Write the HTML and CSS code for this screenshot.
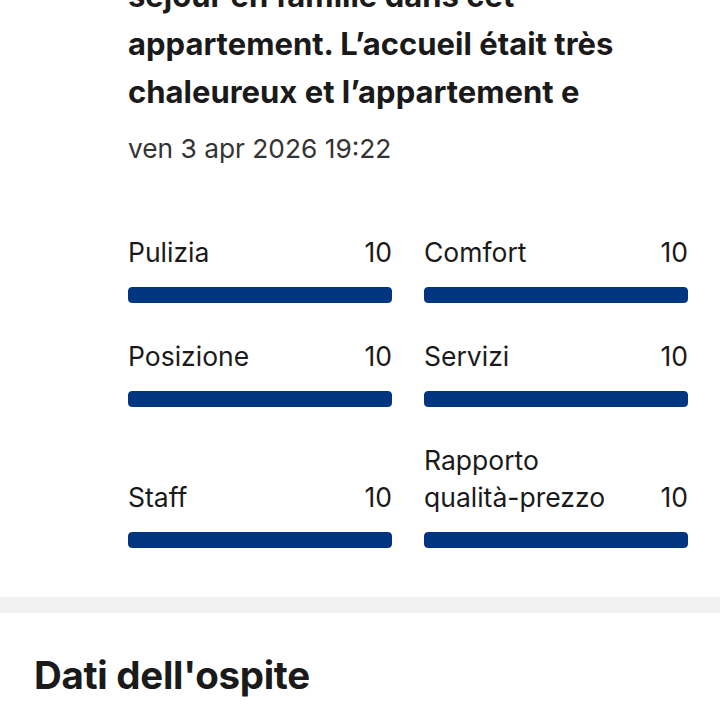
FILE: index.html
```html
<!DOCTYPE html>
<html>
<head>
  <title>Recensione</title>
  <link rel="stylesheet" href="styles.css">
</head>
<body>
  <div id="review">
    <p class="review-text">séjour en famille dans cet appartement. L’accueil était très chaleureux et l’appartement e</p>
    <div class="review-date">ven 3 apr 2026 19:22</div>

    <div id="scores">
      <div class="score">
        <div class="score-head"><span>Pulizia</span><span>10</span></div>
        <div class="bar"><div class="bar-fill" style="width: 100%"></div></div>
      </div>
      <div class="score">
        <div class="score-head"><span>Comfort</span><span>10</span></div>
        <div class="bar"><div class="bar-fill" style="width: 100%"></div></div>
      </div>
      <div class="score">
        <div class="score-head"><span>Posizione</span><span>10</span></div>
        <div class="bar"><div class="bar-fill" style="width: 100%"></div></div>
      </div>
      <div class="score">
        <div class="score-head"><span>Servizi</span><span>10</span></div>
        <div class="bar"><div class="bar-fill" style="width: 100%"></div></div>
      </div>
      <div class="score">
        <div class="score-head"><span>Staff</span><span>10</span></div>
        <div class="bar"><div class="bar-fill" style="width: 100%"></div></div>
      </div>
      <div class="score">
        <div class="score-head"><span>Rapporto<br>qualità-prezzo</span><span>10</span></div>
        <div class="bar"><div class="bar-fill" style="width: 100%"></div></div>
      </div>
    </div>
  </div>

  <div class="divider"></div>

  <div id="guest">
    <h2>Dati dell'ospite</h2>
  </div>
</body>
</html>
```

FILE: styles.css
```css
body {
  margin: 0;
  padding: 0;
  width: 720px;
  overflow: hidden;
  background-color: #fff;
  color: #1a1a1a;
  font-family: Inter, "Noto Sans", sans-serif;
}

#review {
  padding: 0 32px 0 128px;
  margin-top: -28px; /* list is scrolled, first line sits under the top edge */
}

.review-text {
  margin: 0;
  font-size: 31px;
  font-weight: 700;
  line-height: 48px;
  width: 540px;
  color: #1a1a1a;
}

.review-date {
  margin-top: 15px;
  font-size: 26.3px;
  line-height: 36px;
  color: #333;
}

#scores {
  display: grid;
  grid-template-columns: 1fr 1fr;
  column-gap: 32px;
  row-gap: 35px;
  margin-top: 67px;
  padding-bottom: 49px;
}

.score {
  display: flex;
  flex-direction: column;
  justify-content: flex-end;
}

.score-head {
  display: flex;
  justify-content: space-between;
  align-items: flex-end;
  font-size: 26.5px;
  line-height: 37px;
  color: #1a1a1a;
}

.bar {
  margin-top: 16px;
  height: 16px;
  border-radius: 4px;
  background-color: #e7e7e7;
  overflow: hidden;
}

.bar-fill {
  height: 100%;
  background-color: #003580; /* brand blue */
  border-radius: 4px;
}

.divider {
  height: 16px;
  background-color: #f2f2f2;
}

#guest {
  padding: 34px 34px;
}

#guest h2 {
  margin: 0;
  font-size: 38.5px;
  font-weight: 700;
  line-height: 56px;
  letter-spacing: -0.3px;
  color: #1a1a1a;
}
```
